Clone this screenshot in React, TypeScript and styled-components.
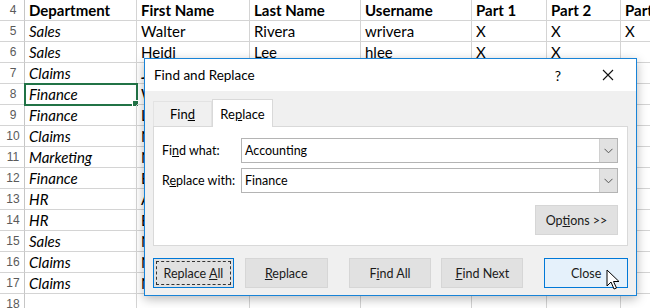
import styled, { createGlobalStyle } from "styled-components";

const GlobalStyle = createGlobalStyle`
  html, body {
    margin: 0;
    padding: 0;
    background: #ffffff;
    overflow: hidden;
  }
`;

const Screen = styled.div`
  position: relative;
  width: 650px;
  height: 308px;
  overflow: hidden;
  background: #ffffff;
`;

const Sheet = styled.div`
  display: grid;
  grid-template-columns: 25px 112px 113px 111px 111px 75px 74px 80px;
  grid-auto-rows: 21px;
  font-family: Lato, "Liberation Sans", sans-serif;
  font-size: 15px;
  color: #000;
`;

const RowHead = styled.div`
  border-right: 1px solid #c6c6c6;
  border-bottom: 1px solid #d4d4d4;
  color: #5a5a5a;
  font-family: "Liberation Sans", sans-serif;
  font-size: 12px;
  display: flex;
  align-items: center;
  justify-content: center;
  padding-left: 2px;
`;

const Cell = styled.div<{ $bold?: boolean; $italic?: boolean; $selected?: boolean }>`
  position: relative;
  border-right: 1px solid #d4d4d4;
  border-bottom: 1px solid #d4d4d4;
  padding: 0 4px;
  display: flex;
  align-items: center;
  white-space: nowrap;
  overflow: hidden;
  font-weight: ${(p) => (p.$bold ? 700 : 400)};
  font-style: ${(p) => (p.$italic ? "italic" : "normal")};
  ${(p) =>
    p.$selected &&
    `
    overflow: visible;
    outline: 2px solid #217346;
    outline-offset: -1px;
    &::after {
      content: "";
      position: absolute;
      right: -3px;
      bottom: -3px;
      width: 5px;
      height: 5px;
      background: #217346;
      border: 1px solid #fff;
    }
  `}
`;

const Dialog = styled.div`
  position: absolute;
  left: 144px;
  top: 58px;
  width: 491px;
  height: 236px;
  border: 1px solid #1883d7;
  background: #f0f0f0;
  box-shadow: 0 3px 10px rgba(0, 0, 0, 0.28);
  font-family: Lato, "Liberation Sans", sans-serif;
  font-size: 12.5px;
  color: #000;
  display: flex;
  flex-direction: column;
`;

const TitleBar = styled.div`
  height: 32px;
  background: #ffffff;
  display: flex;
  align-items: center;
  padding-left: 9px;
  font-size: 13.5px;
`;

const TitleText = styled.div`
  flex: 1;
`;

const TitleButton = styled.div<{ $w: number }>`
  width: ${(p) => p.$w}px;
  height: 32px;
  display: flex;
  align-items: center;
  justify-content: center;
  font-size: 14px;
`;

const Body = styled.div`
  flex: 1;
  padding: 8px 8px 0 8px;
  display: flex;
  flex-direction: column;
`;

const Tabs = styled.div`
  display: flex;
  align-items: flex-end;
  height: 27px;
`;

const Tab = styled.div<{ $active?: boolean; $w: number }>`
  width: ${(p) => p.$w}px;
  height: ${(p) => (p.$active ? 28 : 25)}px;
  box-sizing: border-box;
  display: flex;
  align-items: center;
  justify-content: center;
  background: ${(p) => (p.$active ? "#ffffff" : "#f0f0f0")};
  border: 1px solid ${(p) => (p.$active ? "#d9d9d9" : "#e3e3e3")};
  border-bottom: none;
  margin-bottom: ${(p) => (p.$active ? -1 : 0)}px;
  position: relative;
  z-index: ${(p) => (p.$active ? 1 : 0)};
  font-size: 13px;
`;

const Panel = styled.div`
  height: 120px;
  box-sizing: border-box;
  width: 475px;
  background: #ffffff;
  border: 1px solid #d9d9d9;
  padding: 11px 9px 0 8px;
  display: flex;
  flex-direction: column;
`;

const FieldRow = styled.div`
  display: flex;
  align-items: center;
  height: 25px;
  margin-bottom: 5px;
`;

const Label = styled.div`
  width: 79px;
  white-space: nowrap;
`;

const Combo = styled.div`
  flex: 1;
  height: 25px;
  box-sizing: border-box;
  border: 1px solid #b4b4b4;
  display: flex;
  align-items: stretch;
`;

const ComboText = styled.div`
  flex: 1;
  padding-left: 3px;
  display: flex;
  align-items: center;
`;

const ComboArrow = styled.div`
  width: 17px;
  background: #e1e1e1;
  border-left: 1px solid #d0d0d0;
  display: flex;
  align-items: center;
  justify-content: center;
`;

const OptionsRow = styled.div`
  display: flex;
  justify-content: flex-end;
  margin-top: 7px;
`;

const Button = styled.div<{ $w: number; $variant?: "focus" | "hover" }>`
  position: relative;
  width: ${(p) => p.$w}px;
  height: 30px;
  box-sizing: border-box;
  display: flex;
  align-items: center;
  justify-content: center;
  color: #1a1a1a;
  background: ${(p) => (p.$variant === "hover" ? "#e5f1fb" : "#e1e1e1")};
  border: 1px solid ${(p) => (p.$variant ? "#0078d7" : "#d6d6d6")};
  ${(p) =>
    p.$variant === "focus" &&
    `
    &::before {
      content: "";
      position: absolute;
      inset: 2px;
      border: 1px dashed #333;
    }
  `}
`;

const ButtonRow = styled.div`
  display: flex;
  margin-top: 12px;
`;

const Gap = styled.div<{ $w: number }>`
  width: ${(p) => p.$w}px;
`;

const Cursor = styled.svg`
  position: absolute;
  left: 606px;
  top: 269px;
`;

const Chevron = () => (
  <svg width="9" height="6" viewBox="0 0 9 6">
    <path d="M0.5 0.8 L4.5 4.8 L8.5 0.8" fill="none" stroke="#555" strokeWidth="1" />
  </svg>
);

const rows: [number, string, string, string, string, string, string, string][] = [
  [5, "Sales", "Walter", "Rivera", "wrivera", "X", "X", "X"],
  [6, "Sales", "Heidi", "Lee", "hlee", "X", "X", ""],
  [7, "Claims", "Jennifer", "Ross", "jross", "X", "", ""],
  [8, "Finance", "William", "Ortiz", "wortiz", "X", "X", ""],
  [9, "Finance", "Lisa", "Kim", "lkim", "X", "", ""],
  [10, "Claims", "Nathan", "Perez", "nperez", "", "X", ""],
  [11, "Marketing", "Nancy", "Wong", "nwong", "X", "", ""],
  [12, "Finance", "Brian", "Fox", "bfox", "", "X", ""],
  [13, "HR", "Anna", "Cole", "acole", "X", "", ""],
  [14, "HR", "Ben", "Hart", "bhart", "X", "X", ""],
  [15, "Sales", "Nick", "Moss", "nmoss", "", "", ""],
  [16, "Claims", "Nora", "Bell", "nbell", "X", "", ""],
  [17, "Claims", "Neil", "Ward", "nward", "", "X", ""],
  [18, "", "", "", "", "", "", ""],
];

export default function App() {
  return (
    <Screen>
      <GlobalStyle />
      <Sheet>
        <RowHead>4</RowHead>
        {["Department", "First Name", "Last Name", "Username", "Part 1", "Part 2", "Part 3"].map((h) => (
          <Cell $bold key={h}>
            {h}
          </Cell>
        ))}
        {rows.map(([n, ...cells]) => [
          <RowHead key={`h${n}`}>{n}</RowHead>,
          ...cells.map((c, i) => (
            <Cell key={`${n}-${i}`} $italic={i === 0} $selected={n === 8 && i === 0}>
              {c}
            </Cell>
          )),
        ])}
      </Sheet>

      <Dialog>
        <TitleBar>
          <TitleText>Find and Replace</TitleText>
          <TitleButton $w={44}>?</TitleButton>
          <TitleButton $w={56}>
            <svg width="12" height="12" viewBox="0 0 12 12">
              <path d="M1 1 L11 11 M11 1 L1 11" stroke="#111" strokeWidth="1.1" />
            </svg>
          </TitleButton>
        </TitleBar>
        <Body>
          <Tabs>
            <Tab $w={59}>
              <span>
                Fin<u>d</u>
              </span>
            </Tab>
            <Tab $w={61} $active>
              <span>
                Re<u>p</u>lace
              </span>
            </Tab>
          </Tabs>
          <Panel>
            <FieldRow>
              <Label>
                Fi<u>n</u>d what:
              </Label>
              <Combo>
                <ComboText>Accounting</ComboText>
                <ComboArrow>
                  <Chevron />
                </ComboArrow>
              </Combo>
            </FieldRow>
            <FieldRow>
              <Label>
                R<u>e</u>place with:
              </Label>
              <Combo>
                <ComboText>Finance</ComboText>
                <ComboArrow>
                  <Chevron />
                </ComboArrow>
              </Combo>
            </FieldRow>
            <OptionsRow>
              <Button $w={83}>
                <span>
                  Op<u>t</u>ions &gt;&gt;
                </span>
              </Button>
            </OptionsRow>
          </Panel>
          <ButtonRow>
            <Button $w={81} $variant="focus">
              <span>
                Replace <u>A</u>ll
              </span>
            </Button>
            <Gap $w={11} />
            <Button $w={83}>
              <span>
                <u>R</u>eplace
              </span>
            </Button>
            <Gap $w={21} />
            <Button $w={83}>
              <span>
                F<u>i</u>nd All
              </span>
            </Button>
            <Gap $w={10} />
            <Button $w={82}>
              <span>
                <u>F</u>ind Next
              </span>
            </Button>
            <Gap $w={21} />
            <Button $w={84} $variant="hover">
              Close
            </Button>
          </ButtonRow>
        </Body>
      </Dialog>

      <Cursor width="16" height="24" viewBox="0 0 16 24">
        <path
          d="M1 1 L1 17 L5 13 L8 20 L10.5 19 L7.5 12.5 L13 12.5 Z"
          fill="#fff"
          stroke="#000"
          strokeWidth="1"
          strokeLinejoin="miter"
        />
      </Cursor>
    </Screen>
  );
}
